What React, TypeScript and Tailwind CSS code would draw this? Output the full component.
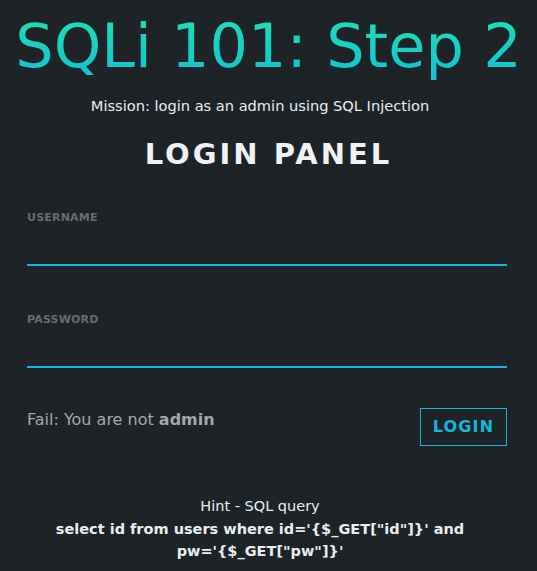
export default function App() {
  return (
    <div className="min-h-[571px] w-full bg-[#1d2327] font-['DejaVu_Sans',sans-serif] text-[#e8eef2]">
      <div className="flex flex-col items-center pt-[8px]">
        <h1 className="bg-gradient-to-b from-[#22e2ae] to-[#14bfd3] bg-clip-text text-[60.5px] leading-[76px] text-transparent">
          SQLi 101: Step 2
        </h1>
        <p className="mt-[12px] mr-[17px] text-[14.6px] leading-[20px]">Mission: login as an admin using SQL Injection</p>
        <h2 className="mt-[20px] text-[29px] font-bold leading-[36px] tracking-[3px] text-[#eef2f7]">LOGIN PANEL</h2>
      </div>

      <form className="mt-[39px] pl-[27px] pr-[30px]" onSubmit={(e) => e.preventDefault()}>
        <label className="block">
          <span className="block text-[11px] font-bold leading-[14px] tracking-[0.2px] text-[#686c6f]">USERNAME</span>
          <input
            type="text"
            className="mt-[11px] block h-[30px] w-full border-b-2 border-[#14b7d9] bg-transparent text-[16px] outline-none"
          />
        </label>
        <label className="mt-[47px] block">
          <span className="block text-[11px] font-bold leading-[14px] tracking-[0.2px] text-[#686c6f]">PASSWORD</span>
          <input
            type="password"
            className="mt-[11px] block h-[30px] w-full border-b-2 border-[#14b7d9] bg-transparent text-[16px] outline-none"
          />
        </label>

        <div className="mt-[40px] flex items-start justify-between">
          <p className="mt-[2px] text-[16px] leading-[20px] text-[#a2a8ad]">
            Fail: You are not <b>admin</b>
          </p>
          <button
            type="submit"
            className="h-[38px] w-[87px] border border-[#14b7d9] text-[16px] font-bold tracking-[1.2px] text-[#14b7d9]"
          >
            LOGIN
          </button>
        </div>
      </form>

      <div className="mt-[49px] pr-[17px] pb-[10px] text-center text-[14.5px] leading-[22.5px]">
        <p>Hint - SQL query</p>
        <p className="mx-auto w-[440px] font-bold">select id from users where id='{'{$_GET["id"]}'}' and pw='{'{$_GET["pw"]}'}'</p>
      </div>
    </div>
  );
}
